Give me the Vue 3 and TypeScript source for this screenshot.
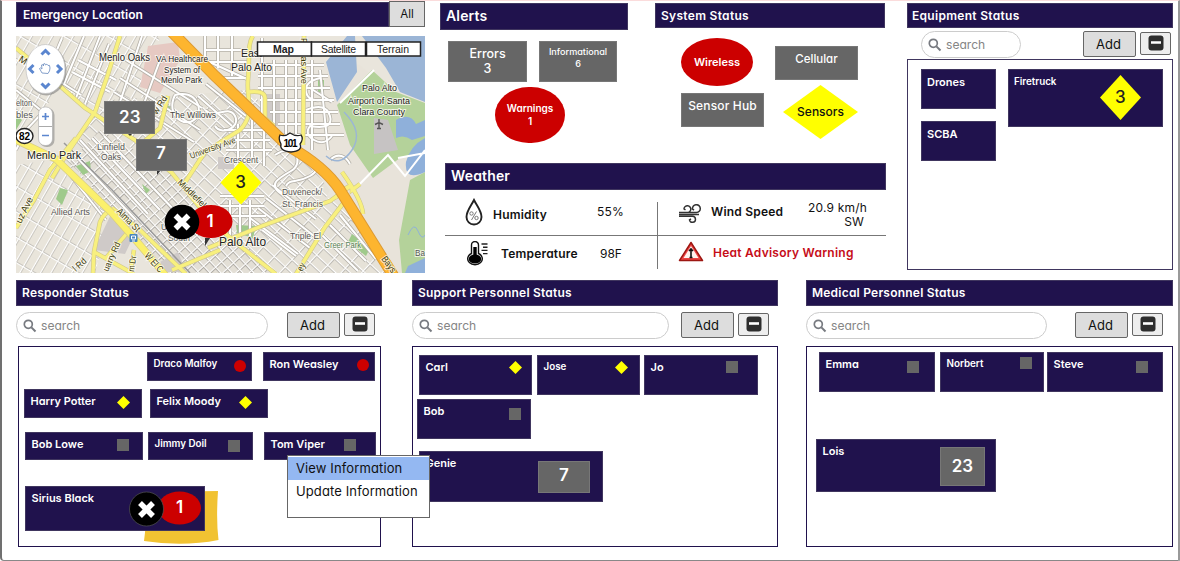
<script setup lang="ts">
type Kind = 'circle' | 'diamond' | 'square'
interface Card {
  name: string
  w: number
  h: number
  ml?: number
  size?: number
  kind?: Kind
  right?: number
  top?: number
  marker?: 'victim' | 'seven' | 'twentythree'
}
interface Row { mt: number; cards: Card[] }
interface Board { id: string; title: string; rows: Row[] }

const boards: Board[] = [
  {
    id: 'responder', title: 'Responder Status',
    rows: [
      { mt: 5, cards: [
        { name: 'Draco Malfoy', w: 105, h: 29, ml: 128, size: 9.8, kind: 'circle', right: 5, top: 8 },
        { name: 'Ron Weasley', w: 112, h: 29, ml: 11, kind: 'circle', right: 5, top: 7 },
      ] },
      { mt: 8, cards: [
        { name: 'Harry Potter', w: 118, h: 29, ml: 5, kind: 'diamond', right: 11, top: 7 },
        { name: 'Felix Moody', w: 118, h: 29, ml: 8, kind: 'diamond', right: 15, top: 7 },
      ] },
      { mt: 14, cards: [
        { name: 'Bob Lowe', w: 118, h: 28, ml: 6, kind: 'square', right: 13, top: 7 },
        { name: 'Jimmy Doil', w: 105, h: 28, ml: 5, size: 9.8, kind: 'square', right: 12, top: 8 },
        { name: 'Tom Viper', w: 112, h: 28, ml: 11, kind: 'square', right: 19, top: 7 },
      ] },
      { mt: 26, cards: [{ name: 'Sirius Black', w: 180, h: 45, ml: 6, marker: 'victim' }] },
    ],
  },
  {
    id: 'support', title: 'Support Personnel Status',
    rows: [
      { mt: 8, cards: [
        { name: 'Carl', w: 113, h: 40, ml: 6, kind: 'diamond', right: 9, top: 6 },
        { name: 'Jose', w: 103, h: 40, ml: 5, size: 9.8, kind: 'diamond', right: 11, top: 6 },
        { name: 'Jo', w: 114, h: 40, ml: 4, kind: 'square', right: 19, top: 6 },
      ] },
      { mt: 4, cards: [{ name: 'Bob', w: 114, h: 40, ml: 4, kind: 'square', right: 9, top: 9 }] },
      { mt: 12, cards: [{ name: 'Genie', w: 184, h: 51, ml: 6, marker: 'seven' }] },
    ],
  },
  {
    id: 'medical', title: 'Medical Personnel Status',
    rows: [
      { mt: 5, cards: [
        { name: 'Emma', w: 116, h: 40, ml: 12, kind: 'square', right: 15, top: 9 },
        { name: 'Norbert', w: 104, h: 40, ml: 5, size: 9.8, kind: 'square', right: 11, top: 5 },
        { name: 'Steve', w: 116, h: 40, ml: 3, kind: 'square', right: 14, top: 9 },
      ] },
      { mt: 47, cards: [{ name: 'Lois', w: 180, h: 53, ml: 9, marker: 'twentythree' }] },
    ],
  },
]

const cardStyle = (c: Card) => ({
  width: c.w + 'px',
  height: c.h + 'px',
  marginLeft: (c.ml ?? 0) + 'px',
  fontSize: (c.size ?? 11) + 'px',
})
const dotStyle = (c: Card) => ({ marginRight: c.right + 'px', marginTop: c.top + 'px' })

interface MapLabel { t: string; x: number; y: number; w: number; s: number; rot?: number; c?: string }
const road = '#3d3a0a'
const labels: MapLabel[] = [
  { t: 'Menlo Oaks', x: 99, y: 61, w: 51, s: 10 },
  { t: 'VA Healthcare', x: 156, y: 62, w: 52, s: 9 },
  { t: 'System of', x: 164, y: 73, w: 36, s: 9 },
  { t: 'Menlo Park', x: 161, y: 83, w: 41, s: 9 },
  { t: 'East', x: 241, y: 57, w: 21, s: 11 },
  { t: 'Palo Alto', x: 231, y: 71, w: 41, s: 10.5 },
  { t: 'Palo Alto', x: 362, y: 91, w: 35, s: 9.5 },
  { t: 'Airport of Santa', x: 348, y: 104, w: 62, s: 9.5 },
  { t: 'Clara County', x: 353, y: 115, w: 52, s: 9.5 },
  { t: 'elton', x: 16, y: 106, w: 16, s: 9.5, c: '#555' },
  { t: 'bles', x: 16, y: 118, w: 17, s: 9.5, c: '#555' },
  { t: 'The Willows', x: 170, y: 118, w: 46, s: 9.5, c: '#444' },
  { t: 'Linfield', x: 97, y: 150, w: 28, s: 9, c: '#555' },
  { t: 'Oaks', x: 101, y: 160, w: 20, s: 9, c: '#555' },
  { t: 'Menlo Park', x: 27, y: 159, w: 54, s: 11.5 },
  { t: 'Crescent', x: 224, y: 163, w: 34, s: 9, c: '#555' },
  { t: 'Allied Arts', x: 51, y: 215, w: 39, s: 9, c: '#555' },
  { t: 'University', x: 161, y: 230, w: 36, s: 9, c: '#555' },
  { t: 'South', x: 168, y: 241, w: 22, s: 9, c: '#555' },
  { t: 'Duveneck/', x: 282, y: 195, w: 40, s: 9, c: '#555' },
  { t: 'St. Francis', x: 282, y: 207, w: 41, s: 9, c: '#555' },
  { t: 'Triple El', x: 290, y: 239, w: 31, s: 9, c: '#555' },
  { t: 'Greer Park', x: 324, y: 248, w: 37, s: 8.5, c: '#588058' },
  { t: 'Palo Alto', x: 219, y: 246, w: 47, s: 12.5 },
  { t: 'Ba', x: 415, y: 256, w: 10, s: 9, c: '#555' },
  { t: 'University Ave', x: 191, y: 159, w: 48, s: 9, rot: -20, c: road },
  { t: 'Middlefield Rd', x: 177, y: 183, w: 54, s: 9, rot: 44, c: road },
  { t: 'Alma St', x: 116, y: 212, w: 29, s: 9.5, rot: 45, c: road },
  { t: 'W El C', x: 144, y: 256, w: 23, s: 9.5, rot: 48, c: road },
  { t: 'uz Ave', x: 21, y: 224, w: 28, s: 9.5, rot: -64, c: road },
  { t: 'uarry Rd', x: 108, y: 272, w: 31, s: 9, rot: -66, c: road },
  { t: 'm Dr', x: 134, y: 272, w: 16, s: 9, rot: -82, c: road },
  { t: 'l Rd', x: 76, y: 272, w: 15, s: 9.5, rot: -42, c: road },
  { t: 'w Rd', x: 157, y: 115, w: 20, s: 9, rot: -58, c: road },
  { t: 'Pulgas Ave', x: 301, y: 38, w: 46, s: 9, rot: 90, c: road },
  { t: 'M', x: 18, y: 61, w: 8, s: 10, rot: 32, c: road },
  { t: 'Bays', x: 381, y: 259, w: 18, s: 9.5, rot: 54, c: road },
  { t: 'ey', x: 302, y: 272, w: 8, s: 9.5, rot: -60, c: road },
]

const minor = [
  'M16 150L26 130L43 112L16 90', 'M62 38l-15 35l34 22', 'M84 36l-20 48', 'M78 60l38 20M72 72l38 20',
  'M85 104l24-60M100 36l-24 62', 'M126 60l76 48M120 78l80 52M114 92l80 50', 'M142 36l-32 96M160 60l-28 76',
  'M175 95c20-6 30 14 20 24s-30-4-20-24', 'M205 110c10 10 24-6 30 6s-14 20-20 10', 'M70 150l66 70M80 140l68 74M92 138l68 72M104 136l72 76M66 170l40 50',
  'M205 36v24l44 20M218 36v32M232 36v40', 'M206 50h42M205 62h45M212 78h38', 'M262 38v80M274 60v70M286 60v80M296 60v90M312 60v90M320 70l8 80',
  'M256 65h68M258 76h70M258 88h72M260 100h74M270 112h68M278 124h62M284 135h60',
  'M320 78q-16 4-14 14t16 8M306 110q20-8 24 6t-20 10q-6 8 4 14t18-4M310 88l22 14',
  'M206 84l40 32M198 96l34 30M216 78l30 24M224 130h40M230 140h40M226 150h46M238 124v36M252 120v40M264 130v36',
  'M275 155c20-14 30 8 16 16s-24 14-8 24M300 150c14 10 24 18 10 26s-20 2-24 10M330 160c8-8 16-4 20 4',
  'M272 185l44 34M266 198l48 38M258 208l52 40M250 218l48 36M262 230l34 26', 'M230 200v40M240 204v34M250 200v36M220 196h44M220 206h44M224 216h42',
  'M330 225l36 36M322 235l36 36M340 215l36 44M352 212l28 40',
]
const major = [
  'M120 36Q114 55 108 74L95 112L66 155L52 178', 'M60 86L85 108L135 140L172 173L210 220L235 242L276 274',
  'M253 36C247 44 250 60 248 80S256 113 240 130L205 152L184 184', 'M248 92Q265 90 265 98V118L274 126', 'M304 36L303 145',
  'M208 248L262 226L330 201L352 185', 'M296 274L325 227L345 201L336 184', 'M342 172Q362 200 363 214M335 198Q352 180 352 190L360 184',
  'M76 138L50 170L34 200L16 228', 'M112 208L140 230L186 274', 'M93 274L94 252L100 222Q104 212 114 209', 'M94 252L134 274', 'M106 258L128 232', 'M134 250L130 274',
  'M172 270L220 250', 'M168 96L160 128L140 145', 'M16 48L54 80',
]
</script>

<template>
  <div class="page">
    <div class="top">
      <section class="location">
        <div class="location-head">
          <h2 class="bar loc-title">Emergency Location</h2>
          <button class="all">All</button>
        </div>
        <svg class="map" viewBox="16 36 409 237" width="409" height="237">
          <defs>
            <pattern id="blocks" width="15" height="10" patternUnits="userSpaceOnUse" patternTransform="rotate(43)">
              <rect width="15" height="10" fill="#e6e2d8" /><path d="M0 0H15M0 0V10" stroke="#aeaaa2" stroke-width="4" /><path d="M0 0H15M0 0V10" stroke="#fff" stroke-width="2.400" />
            </pattern>
            <pattern id="fine" width="9" height="8" patternUnits="userSpaceOnUse" patternTransform="rotate(47)">
              <rect width="9" height="8" fill="#e3dfd6" /><path d="M0 0H9M0 0V8" stroke="#a5a19a" stroke-width="3.600" /><path d="M0 0H9M0 0V8" stroke="#fff" stroke-width="2" />
            </pattern>
            <pattern id="long" width="22" height="9" patternUnits="userSpaceOnUse" patternTransform="rotate(-60)">
              <rect width="22" height="9" fill="#e9e5db" /><path d="M0 0H22M0 0V9" stroke="#b8b4ab" stroke-width="4" /><path d="M0 0H22M0 0V9" stroke="#fff" stroke-width="2.400" />
            </pattern>
          </defs>
          <rect x="16" y="36" width="409" height="237" fill="#e9e5dc" />
          <path d="M16 36H160L135 140L60 90L16 140Z" fill="url(#long)" />
          <path d="M110 100L250 90L330 190L290 273H165L60 155Z" fill="url(#blocks)" />
          <path d="M135 150L175 175L240 240L276 273H170L70 162L100 130Z" fill="url(#fine)" />
          <path d="M16 165L50 160L110 215L95 273H16Z" fill="url(#long)" />
          <path d="M300 195L345 200L394 273H270Z" fill="url(#blocks)" />
          <path d="M140 87L148 46L178 42L180 60L160 93Z" fill="#e6c9c2" />
          <path d="M112 212L134 235L125 254L94 250Z M266 94h14v32h-14z M160 262l18-10 8 20h-20z M218 157h16v12h-16z" fill="#cfcac8" />
          <path d="M330 60L360 65L424 120V273H392L345 195L310 150Z" fill="#e8e3da" />
          <path d="M347 36H355L357 72L337 102L326 62Z M362 36H425V102L400 92L386 68Z" fill="#9bb5d6" />
          <path d="M337 105L372 70L396 92L425 103V150L400 158L373 178L350 145Z M410 180L425 172V273H402L399 240Z" fill="#b4d29a" />
          <path d="M374 118L388 120L398 150L374 154Z" fill="#c6c3c3" />
          <path d="M396 120Q410 112 416 124L425 120V136L412 140Q404 134 396 138Z M425 138V172Q404 182 406 162Q410 146 425 138Z M408 266L425 258V273H405Z" fill="#8fb0da" />
          <path d="M76 166l14-5 1 10-8 4zM60 188l8 2-6 15-6-6zM142 184l8 6-4 4zM236 225l20 1-3 12-16-5zM352 234l18 14-4 8-18-14zM16 115l6 5-6 10zM318 80h6v12h-6zM165 102l6 6-5 4z" fill="#9fca8b" />
          <path v-for="d in minor" :key="'a' + d" :d="d" class="minor-edge" />
          <path v-for="d in minor" :key="'b' + d" :d="d" class="minor" />
          <path d="M425 150L405 176L388 155L352 192M340 103L374 70M425 153L398 158" class="minor" />
          <path d="M326 156Q340 168 352 150T344 112" stroke="#9bb5d6" stroke-width="1.4" fill="none" />
          <path d="M408 235q6-14 10-4t7 4" stroke="#8fb0da" fill="none" />
          <path d="M64 143L112 190L190 273" stroke="#999" stroke-width="1.5" fill="none" />
          <path v-for="d in major" :key="'c' + d" :d="d" class="major-edge" />
          <path v-for="d in major" :key="'d' + d" :d="d" class="major" />
          <path d="M16 140L56 159L111 212L140 245L166 276" class="camino-edge" /><path d="M16 140L56 159L111 212L140 245L166 276" class="camino" />
          <path d="M168 28L215 76L288 146Q324 166 340 190L396 280" class="hwy-edge" /><path d="M168 28L215 76L288 146Q324 166 340 190L396 280" class="hwy" />
          <text v-for="(l, i) in labels" :key="i" class="map-text" :x="l.x" :y="l.y" :font-size="l.s" :textLength="l.w" lengthAdjust="spacingAndGlyphs" :fill="l.c ?? '#222'" :transform="l.rot ? `rotate(${l.rot} ${l.x} ${l.y})` : undefined">{{ l.t }}</text>
          <path d="M379 119V129M375 124.500L379 122.500L383 124.500M377 128.500H381" stroke="#555" stroke-width="1.4" fill="none" />
          <rect x="129.500" y="234" width="8" height="8" rx="1" fill="#4a86bd" /><path d="M131.500 236h4v3h-4zM132 241h3" stroke="#fff" fill="none" />
          <path d="M280 135Q285 137 290 133Q296 137 301 135Q304 139 300 144Q303 151 291 152Q279 151 281 144Q278 139 280 135Z" fill="#fff" stroke="#222" stroke-width="1.3" />
          <text x="283.500" y="147" class="shield" font-size="10" textLength="14">101</text>
          <ellipse cx="24.500" cy="136" rx="8.500" ry="7.500" fill="#fff" stroke="#222" stroke-width="1.4" />
          <text x="19" y="140" class="shield" font-size="10" textLength="11">82</text>
          <ellipse cx="46.500" cy="70.500" rx="20" ry="25" fill="#777" opacity=".55" />
          <ellipse cx="45.500" cy="69" rx="19.500" ry="24.500" fill="#fff" stroke="#bbb" stroke-width=".6" />
          <path d="M41.500 54.500L45.500 50.500L49.500 54.500M41.500 83.500L45.500 87.500L49.500 83.500M33.500 65L29.500 69L33.500 73M57 65L61 69L57 73" stroke="#5b86cf" stroke-width="3" fill="none" />
          <path d="M42 73L39.500 68.500Q40 67 42 69L41.500 65Q42.500 63.500 43.500 66V64Q45 62.500 45.500 65Q47 63 48 65.500Q50 64 50 68Q50 71 48 73.500Z" fill="#fff" stroke="#7795c4" stroke-width=".9" />
          <rect x="39.500" y="108" width="15" height="39" rx="7" fill="#777" opacity=".5" />
          <rect x="38.500" y="107" width="14" height="38.500" rx="6.500" fill="#fff" stroke="#aaa" stroke-width=".6" />
          <path d="M39 126.500H52" stroke="#aaa" /><path d="M42 116.500H49M45.500 113V120M42 135.500H49" stroke="#5b86cf" stroke-width="1.700" />
          <path d="M157 170h4l-4 5zM205 238h5l-5 8zM128 134h4l-2 2z" fill="#333" />
          <g class="tabs"><rect x="257.500" y="42" width="54" height="14" /><rect x="311.500" y="42" width="54" height="14" /><rect x="366.500" y="42" width="54" height="14" /></g>
          <text x="273" y="52.500" font-size="10.500" font-weight="700" textLength="21" class="tab-text">Map</text>
          <text x="321" y="52.500" font-size="10.500" textLength="35" class="tab-text">Satellite</text>
          <text x="377" y="52.500" font-size="10.500" textLength="32" class="tab-text">Terrain</text>
          <g stroke="#777"><rect x="104.500" y="101.500" width="50" height="32" fill="#666" /><rect x="136.500" y="139.500" width="50" height="31" fill="#666" /></g>
          <text x="129.800" y="122.500" text-anchor="middle" class="num">23</text><text x="160.800" y="159" text-anchor="middle" class="num">7</text>
          <path d="M241 161L261.500 182.500L241 204.500L220.500 182.500Z" fill="#ff0" /><text x="240.500" y="188" text-anchor="middle" class="num dark">3</text>
          <ellipse cx="211" cy="221.500" rx="21.500" ry="16.500" fill="#c00" />
          <circle cx="182" cy="222" r="17.300" fill="#000" /><path d="M175.500 215.500L188.500 228.500M188.500 215.500L175.500 228.500" class="cross" />
          <text x="210" y="227" text-anchor="middle" class="num">1</text>
        </svg>
      </section>

      <section class="middle">
        <div class="mid-top">
          <div class="alerts">
            <h2 class="bar alerts-title">Alerts</h2>
            <div class="alert-row">
              <div class="tile errors">Errors<br>3</div>
              <div class="tile info">Informational<br>6</div>
            </div>
            <div class="oval warn">Warnings<br>1</div>
          </div>
          <div class="system">
            <h2 class="bar sys-title">System Status</h2>
            <div class="sys-row">
              <div class="oval wireless">Wireless</div>
              <div class="tile cellular">Cellular</div>
            </div>
            <div class="sys-row second">
              <div class="tile hub">Sensor Hub</div>
              <div class="rhomb">Sensors</div>
            </div>
          </div>
        </div>
        <h2 class="bar weather-title">Weather</h2>
        <div class="weather">
          <div class="cell humidity">
            <svg width="18" height="28" viewBox="0 0 18 28"><path d="M9 2C6 8 1.500 13 1.500 19A7.500 7.500 0 0 0 16.500 19C16.500 13 12 8 9 2Z" fill="#fff" stroke="#222" stroke-width="1.900" /><g fill="none" stroke="#777" stroke-width="1"><circle cx="6.500" cy="15.500" r="1.700" /><circle cx="11.500" cy="20" r="1.700" /><path d="M11.500 13.500L6.500 22" /></g></svg>
            <b>Humidity</b><span>55%</span>
          </div>
          <div class="cell wind">
            <svg width="23" height="20" viewBox="0 0 23 20" fill="none" stroke="#333" stroke-width="1.500"><path d="M0 8.500H17.500A3.900 3.900 0 1 0 13.500 5L15 6.200M1 8.500H8A3.400 3.400 0 1 0 5 4.800L6.500 5.800M0 10.500H20M0 12.300H13.500A3 3 0 1 1 10.500 15.800L12 15" /></svg>
            <b>Wind Speed</b><span>20.9 km/h<br><i>SW</i></span>
          </div>
          <div class="cell temperature">
            <svg width="23" height="25" viewBox="0 0 23 25"><path d="M5.500 4A3.500 3.500 0 0 1 12.500 4V12.500A7.300 6 0 1 1 5.500 12.500Z" fill="#fff" stroke="#111" stroke-width="1.400" /><ellipse cx="9" cy="18" rx="6.300" ry="4.500" /><path d="M7.300 6H10.700V17H7.300Z" /><path d="M15.500 3H21.500M17 6.200H21.500M15.500 9.400H21.500M17 12.600H21.500" stroke="#222" stroke-width="1.400" /></svg>
            <b>Temperature</b><span>98F</span>
          </div>
          <div class="cell heat">
            <svg width="26" height="21" viewBox="0 0 26 21"><path d="M13 1.500L24.500 19.500H1.500Z" fill="#e44" stroke="#9d1712" stroke-width="1.500" stroke-linejoin="round" /><path d="M13 5L20.500 17H5.500Z" fill="#fff2ee" /><path d="M13 8V16.500M11 10L13 8L15 10M11.500 16.500H14.500" stroke="#111" stroke-width="1.600" fill="none" /></svg>
            <b>Heat Advisory Warning</b>
          </div>
        </div>
      </section>

      <section class="equipment">
        <h2 class="bar">Equipment Status</h2>
        <div class="tools">
          <div class="search"><svg width="14" height="14" viewBox="0 0 14 14" fill="none" stroke="#777a80"><circle cx="5.300" cy="5.300" r="4" stroke-width="1.700" /><path d="M8.400 8.400L12.500 12.500" stroke-width="2" /></svg>search</div>
          <button class="add">Add</button>
          <button class="minus"><svg width="16" height="16" viewBox="0 0 16 16"><rect x=".5" y=".5" width="15" height="15" rx="3" fill="#2e2e2e" /><path d="M3 7.500H13" stroke="#fff" stroke-width="2.600" /></svg></button>
        </div>
        <div class="gear">
          <div class="gear-col"><div class="card unit">Drones</div><div class="card unit">SCBA</div></div>
          <div class="card truck">Firetruck
            <svg width="41" height="45" viewBox="0 0 41 45"><path d="M20.500 0L41 22.500L20.500 45L0 22.500Z" fill="#ff0" /><text x="20.300" y="27.500" text-anchor="middle" class="num dark">3</text></svg>
          </div>
        </div>
      </section>
    </div>

    <div class="bottom">
      <section v-for="b in boards" :key="b.id" class="board" :class="b.id">
        <h2 class="bar">{{ b.title }}</h2>
        <div class="tools">
          <div class="search"><svg width="14" height="14" viewBox="0 0 14 14" fill="none" stroke="#777a80"><circle cx="5.300" cy="5.300" r="4" stroke-width="1.700" /><path d="M8.400 8.400L12.500 12.500" stroke-width="2" /></svg>search</div>
          <button class="add">Add</button>
          <button class="minus"><svg width="16" height="16" viewBox="0 0 16 16"><rect x=".5" y=".5" width="15" height="15" rx="3" fill="#2e2e2e" /><path d="M3 7.500H13" stroke="#fff" stroke-width="2.600" /></svg></button>
        </div>
        <div class="area">
          <div v-for="(r, i) in b.rows" :key="i" class="row" :style="{ marginTop: r.mt + 'px' }">
            <div v-for="c in r.cards" :key="c.name" class="card" :style="cardStyle(c)">
              <svg v-if="c.marker === 'victim'" class="note" width="76" height="55" viewBox="0 0 76 55"><path d="M3 2L75 1Q73 30 75.500 50Q40 57 1 51Q4 30 3 2Z" fill="#f1c232" /></svg>
              <span class="name">{{ c.name }}</span>
              <i v-if="c.kind" class="dot" :class="c.kind" :style="dotStyle(c)"></i>
              <svg v-if="c.marker === 'victim'" class="victim" width="73" height="36" viewBox="0 0 73 36"><ellipse cx="50.500" cy="17" rx="21.500" ry="16.500" fill="#c00" /><circle cx="17.500" cy="18" r="17" fill="#000" stroke="#555" stroke-width=".7" /><path d="M11 12L24 25M24 12L11 25" class="cross" /><text x="50.500" y="22" text-anchor="middle" class="num">1</text></svg>
              <div v-if="c.marker === 'seven'" class="count seven">7</div>
              <div v-if="c.marker === 'twentythree'" class="count lois">23</div>
            </div>
          </div>
        </div>
        <div v-if="b.id === 'responder'" class="menu"><div class="on">View Information</div><div>Update Information</div></div>
      </section>
    </div>
  </div>
</template>

<style>
html, body { margin: 0; background: #fff; }
</style>
<style scoped>
* { box-sizing: border-box; }
.page { width: 1180px; height: 561px; overflow: hidden; background: #fff; border-left: 2px solid #707070; border-right: 2px solid #999; border-bottom: 1px solid #888; border-top: 1px solid #fbdcdc; border-bottom-left-radius: 4px; font-family: Inter, "Open Sans", sans-serif; font-feature-settings: "cv11"; color: #111; }
h2 { margin: 0; }
.bar { background: #20124d; color: #fff; font-size: 12px; font-weight: 600; letter-spacing: .15px; height: 26px; padding-left: 5px; border: 1px solid #40365f; line-height: 24px; white-space: nowrap; }
.top { display: flex; height: 279px; padding-left: 14px; }
.location { width: 409px; padding-top: 1px; }
.location-head { display: flex; height: 25px; margin-bottom: 9px; }
.loc-title { width: 373px; height: 25px; padding-left: 6px; letter-spacing: .05px; }
button { font-family: inherit; font-feature-settings: inherit; color: #111; background: #ddd; border: 1px solid #666; padding: 0; }
.all { width: 36px; height: 26px; margin-top: -1px; font-size: 11.500px; line-height: 22px; }
.map { display: block; }
.minor { fill: none; stroke: #fff; stroke-width: 2; }
.minor-edge { fill: none; stroke: #b5b1a8; stroke-width: 3.600; }
.major { fill: none; stroke: #f8f07e; stroke-width: 3.400; }
.major-edge { fill: none; stroke: #cfc78a; stroke-width: 4.600; }
.camino { fill: none; stroke: #fbf06c; stroke-width: 6; }
.camino-edge { fill: none; stroke: #d9cf84; stroke-width: 7.500; }
.hwy { fill: none; stroke: #fdb52f; stroke-width: 9.500; }
.hwy-edge { fill: none; stroke: #dc9a34; stroke-width: 11.500; }
.map-text { font-family: "Liberation Sans", sans-serif; paint-order: stroke; stroke: #fffdf6; stroke-opacity: .75; stroke-width: 2px; }
.shield { font-family: "Liberation Sans", sans-serif; font-weight: 700; }
.tabs rect { fill: #fff; stroke: #222; stroke-width: 1.500; }
.tab-text { font-family: "Liberation Sans", sans-serif; fill: #222; }
.num { font-family: Inter, sans-serif; font-size: 17px; font-weight: 600; fill: #fff; }
.num.dark { fill: #222; font-weight: 500; }
.cross { stroke: #fff; stroke-width: 5.500; }
.middle { width: 447px; margin-left: 15px; padding-top: 2px; }
.mid-top { display: flex; height: 160px; }
.alerts { width: 188px; }
.alerts-title { height: 27px; font-size: 14px; line-height: 24px; }
.alert-row { display: flex; gap: 12px; margin: 11px 0 0 8px; }
.tile { background: #666; border: 1px solid #777; color: #fff; font-weight: 500; text-align: center; white-space: nowrap; }
.errors { width: 79px; height: 41px; font-size: 12.500px; line-height: 15px; padding-top: 4px; }
.info { width: 78px; height: 41px; font-size: 9.100px; line-height: 12px; padding-top: 4px; }
.oval { background: #c00; color: #fff; border-radius: 50%; text-align: center; font-weight: 600; }
.warn { width: 70px; height: 56px; margin: 5px 0 0 55px; font-size: 10px; line-height: 13px; padding-top: 15px; border-radius: 48% / 50%; }
.system { width: 230px; margin-left: 27px; }
.sys-title { height: 25px; line-height: 24px; letter-spacing: .3px; }
.sys-row { display: flex; margin: 10px 0 0 26px; height: 48px; }
.wireless { width: 72px; height: 48px; font-size: 11px; line-height: 48px; }
.cellular { width: 83px; height: 34px; margin: 8px 0 0 22px; font-size: 11.500px; line-height: 24px; }
.second { margin-top: -1px; height: 54px; }
.hub { width: 83px; height: 34px; margin-top: 8px; font-size: 12px; letter-spacing: .15px; line-height: 24px; }
.rhomb { width: 75px; height: 54px; margin-left: 19px; background: #ff0; clip-path: polygon(50% 0, 100% 50%, 50% 100%, 0 50%); text-align: center; line-height: 53px; font-size: 12px; font-weight: 500; }
.weather-title { width: 441px; height: 27px; margin-left: 5px; font-size: 14px; line-height: 24px; }
.weather { display: grid; grid-template-columns: 213px 228px; grid-template-rows: 46px 33px; width: 441px; margin-left: 5px; white-space: nowrap; }
.cell { display: flex; align-items: flex-start; }
.cell b { font-size: 12px; font-weight: 600; line-height: 16px; letter-spacing: .2px; }
.cell span { font-size: 12px; line-height: 14px; letter-spacing: .2px; }
.cell i { font-style: normal; }
.cell svg { flex: none; }
.humidity { border-bottom: 1px solid #777; }
.wind { border-bottom: 1px solid #777; }
.humidity svg { margin: 8px 0 0 20px; } .humidity b { width: 104px; margin: 17px 0 0 10px; } .humidity span { margin-top: 15px; }
.temperature svg { margin: 5px 0 0 21px; } .temperature b { width: 99px; margin: 10px 0 0 12px; } .temperature span { margin-top: 11px; letter-spacing: 0; }
.wind, .heat { position: relative; }
.wind::before, .heat::before { content: ""; position: absolute; left: -1px; width: 1px; background: #777; top: 0; bottom: 0; }
.wind::before { top: 12px; }
.wind svg { margin: 14px 0 0 21px; } .wind b { width: 97px; margin: 14px 0 0 9px; } .wind span { margin-top: 11px; text-align: right; } .wind i { padding-right: 3px; }
.heat svg { margin: 5px 0 0 20px; } .heat b { color: #c60c18; margin: 9px 0 0 9px; letter-spacing: .25px; }
.equipment { width: 266px; margin-left: 20px; padding-top: 2px; }
.equipment .bar { height: 25px; line-height: 24px; letter-spacing: .3px; padding-left: 4px; }
.tools { display: flex; height: 27px; }
.search { height: 27px; border: 1px solid #ccc; border-radius: 14px; display: flex; align-items: center; padding-left: 6px; gap: 4px; font-size: 12.100px; color: #858585; }
.add { width: 53px; height: 26px; font-size: 13px; line-height: 22px; padding-right: 2px; border-radius: 2px; }
.minus { width: 31px; height: 23px; margin: 1px 0 0 4px; background: #eee; border-radius: 2px; }
.minus svg { display: block; margin: -1px auto 0; }
.equipment .tools { margin-top: 3px; padding-left: 14px; }
.equipment .search { width: 100px; margin-right: 62px; }
.gear { display: flex; gap: 12px; height: 211px; margin-top: 1px; border: 1px solid #40365f; padding: 9px 0 0 13px; }
.gear-col { display: flex; flex-direction: column; gap: 12px; }
.card { background: #20124d; border: 1px solid #40365f; color: #fff; font-weight: 600; font-size: 11px; line-height: 14px; white-space: nowrap; }
.unit { width: 75px; height: 40px; padding: 5px 0 0 5px; }
.truck { width: 155px; height: 58px; display: flex; justify-content: space-between; padding: 5px 21px 0 5px; font-size: 9.800px; }
.bottom { display: flex; padding-left: 14px; }
.board { width: 366px; position: relative; }
.board .bar { letter-spacing: .22px; }
.support { margin-left: 30px; } .medical { margin-left: 28px; width: 367px; }
.board .tools { margin-top: 6px; height: 33px; }
.responder .search { width: 252px; margin-right: 19px; }
.support .search { width: 257px; margin-right: 12px; }
.medical .search { width: 241px; margin-right: 28px; }
.area { height: 201px; border: 1px solid #20124d; display: flow-root; margin-top: 1px; position: relative; z-index: 0; }
.responder .area { margin-left: 2px; width: 363px; }
.row { display: flex; }
.area .card { display: flex; position: relative; flex: none; z-index: 0; }
.area .card:has(.note) { z-index: auto; }
.name { margin: 4px auto 0 5.500px; position: relative; }
.dot { flex: none; width: 12px; height: 12px; background: #666; transform: translateY(-1px); }
.dot.circle { background: #c00; border-radius: 50%; }
.dot.diamond { width: 13px; height: 13px; background: #ff0; clip-path: polygon(50% 0, 100% 50%, 50% 100%, 0 50%); }
.note { position: absolute; left: 117px; top: 3px; z-index: -1; }
.victim { margin: 4px 2px 0 0; }
.count { background: #666; border: 1px solid #777; font-size: 17px; text-align: center; }
.seven { width: 52px; height: 32px; line-height: 27px; margin: 9px 12px 0 0; }
.lois { width: 45px; height: 39px; line-height: 37px; margin: 7px 10px 0 0; }
.menu { position: absolute; left: 271px; top: 175px; width: 143px; height: 63px; padding-top: 1px; background: #fff; border: 1px solid #666; z-index: 5; font-size: 13px; letter-spacing: .12px; line-height: 22px; white-space: nowrap; }
.menu div { height: 23px; padding-left: 8px; }
.menu .on { background: #94b8f2; }
</style>
